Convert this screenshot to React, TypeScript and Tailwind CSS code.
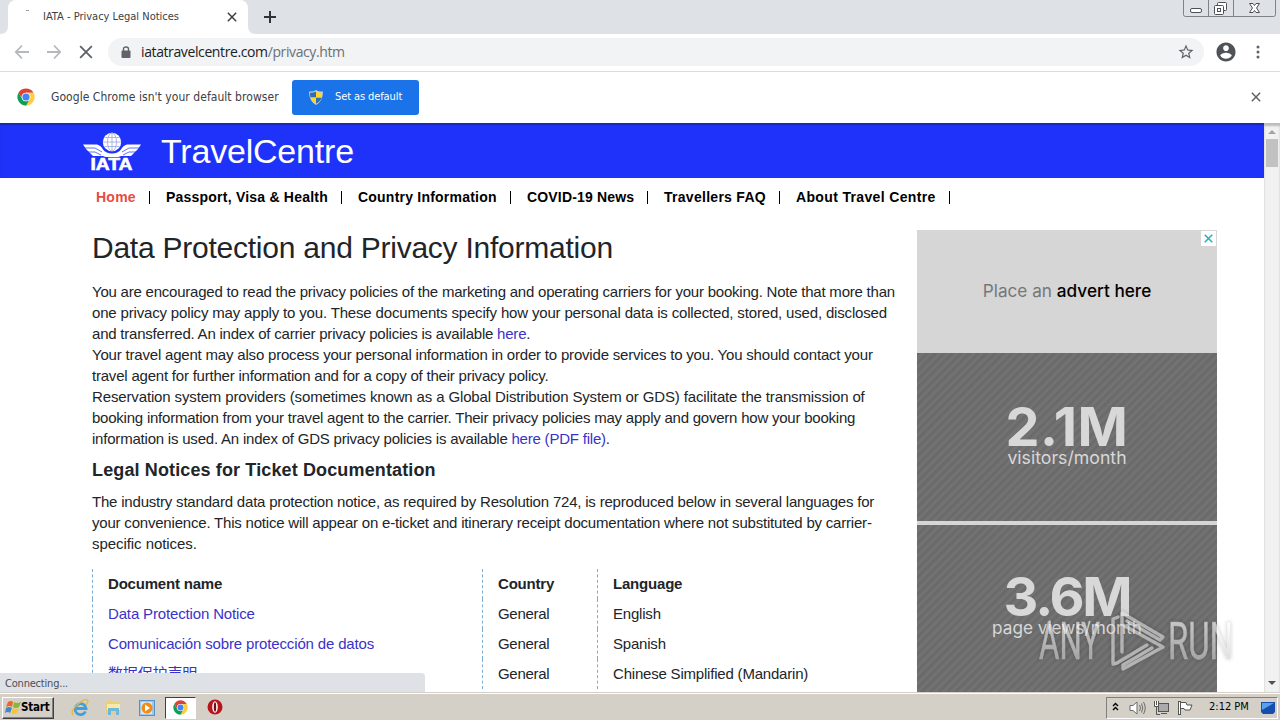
import React from "react";

interface NavItem {
	label: string;
	className: string;
	active?: boolean;
}

interface DocumentRow {
	name: string;
	country: string;
	language: string;
}

const navItems: NavItem[] = [
	{ label: "Home", className: "w-[70px] tracking-[0.25px]", active: true },
	{ label: "Passport, Visa & Health", className: "w-[192px] tracking-[0.22px]" },
	{ label: "Country Information", className: "w-[169px] tracking-[0.22px]" },
	{ label: "COVID-19 News", className: "w-[137px] tracking-[0.17px]" },
	{ label: "Travellers FAQ", className: "w-[132px] tracking-[0.28px]" },
	{ label: "About Travel Centre", className: "w-[170px] tracking-[0.35px]" },
];

const documents: DocumentRow[] = [
	{ name: "Data Protection Notice", country: "General", language: "English" },
	{
		name: "Comunicación sobre protección de datos",
		country: "General",
		language: "Spanish",
	},
	{
		name: "数据保护声明",
		country: "General",
		language: "Chinese Simplified (Mandarin)",
	},
];

const ChromeLogo: React.FC<{ className: string }> = ({ className }) => (
	<svg className={className} viewBox="0 0 48 48">
		<circle cx="24" cy="24" r="23" fill="#fff" />
		<path d="M4.1 12.5A23 23 0 0 1 43.9 12.5H24A11.5 11.5 0 0 0 14 29.8Z" fill="#db4437" />
		<path d="M43.9 12.5A23 23 0 0 1 24 47L34 29.8A11.5 11.5 0 0 0 24 12.5Z" fill="#ffcd40" />
		<path d="M24 47A23 23 0 0 1 4.1 12.5L14 29.8A11.5 11.5 0 0 0 34 29.8Z" fill="#0f9d58" />
		<circle cx="24" cy="24" r="11.5" fill="#f1f1f1" />
		<circle cx="24" cy="24" r="9.5" fill="#4285f4" />
	</svg>
);

const Cross: React.FC<{ className: string; strokeWidth?: number }> = ({
	className,
	strokeWidth = 1.8,
}) => (
	<svg className={className} viewBox="0 0 12 12" fill="none" stroke="currentColor" strokeWidth={strokeWidth}>
		<path d="M1 1l10 10M11 1L1 11" />
	</svg>
);

const WindowButtons = () => (
	<svg className="absolute right-0 top-0 h-[18px] w-[98px]" viewBox="0 0 98 18" fill="none" stroke="#7d828b">
		<path d="M1.5 0V14.5Q1.5 16.5 3.5 16.5H91.5Q93.5 16.5 93.5 14.5V0M26.5 0V16M51.5 0V16" />
		<g stroke="#4c5058" fill="#fff">
			<rect x="8.5" y="8.5" width="11" height="4" rx="1.5" />
			<rect x="35.5" y="2.5" width="9" height="8" rx="1" />
			<rect x="32.5" y="5.5" width="9" height="9" rx="1" />
			<rect x="35.5" y="8.5" width="3" height="3" />
			<path d="M67.5 3.5H71L72.5 5.5L74 3.5H77.5L74.5 8L77.5 12.5H74L72.5 10.5L71 12.5H67.5L70.5 8Z" />
		</g>
	</svg>
);

const TabStrip = () => (
	<div className="relative flex h-[34px] shrink-0 bg-[#dee1e6] pl-2">
		<div className="flex h-full w-[240px] items-center rounded-t-lg bg-white pl-[35px]">
			<span className="w-[186px] whitespace-nowrap text-[11px] text-[#3c4043]">
				IATA - Privacy Legal Notices
			</span>
			<Cross className="ml-[-2px] h-[10px] w-[10px] text-[#3c4043]" />
		</div>
		<div className="absolute left-[26px] top-[10px] h-px w-[3px] bg-[#9aa0a6]" />
		<svg className="absolute left-0 top-[26px] h-2 w-2" viewBox="0 0 8 8">
			<path d="M8 0V8H0Q8 8 8 0Z" fill="#fff" />
		</svg>
		<svg className="absolute left-[248px] top-[26px] h-2 w-2" viewBox="0 0 8 8">
			<path d="M0 0V8H8Q0 8 0 0Z" fill="#fff" />
		</svg>
		<svg className="ml-4 mt-[11px] h-3 w-3" viewBox="0 0 12 12" stroke="#30343a" strokeWidth="2">
			<path d="M6 0V12M0 6H12" />
		</svg>
		<WindowButtons />
	</div>
);

const Toolbar = () => (
	<div className="flex h-[38px] shrink-0 items-center border-b border-[#dadce0] bg-white pb-[2px]">
		<svg className="ml-[14px] h-4 w-4" viewBox="0 0 16 16" fill="none" stroke="#b5b8bc" strokeWidth="1.8">
			<path d="M15 8H2M8 1.5L1.8 8L8 14.5" />
		</svg>
		<svg className="ml-4 h-4 w-4" viewBox="0 0 16 16" fill="none" stroke="#b5b8bc" strokeWidth="1.8">
			<path d="M1 8H14M8 1.5L14.2 8L8 14.5" />
		</svg>
		<Cross className="ml-[17px] h-[14px] w-[14px] text-[#5f6368]" strokeWidth={1.6} />
		<div className="ml-[15px] flex h-7 w-[1096px] items-center rounded-full bg-[#f1f3f4] pl-[13px]">
			<svg className="h-3 w-[10px]" viewBox="0 0 10 12">
				<path d="M2.5 5V3Q2.5 1 5 1Q7.5 1 7.5 3V5" fill="none" stroke="#5f6368" strokeWidth="1.4" />
				<rect x="0.5" y="4.5" width="9" height="7.5" rx="1" fill="#5f6368" />
			</svg>
			<span className="ml-[10px] whitespace-nowrap font-['Open_Sans',sans-serif] text-[14px] tracking-[-0.39px] text-[#6b6f74]">
				<span className="text-[#202124]">iatatravelcentre.com</span>/privacy.htm
			</span>
			<svg className="ml-auto mr-[9px] h-[18px] w-[18px]" viewBox="0 0 24 24" fill="#5f6368">
				<path d="M22 9.24l-7.19-.62L12 2 9.19 8.63 2 9.24l5.46 4.73L5.82 21 12 17.27 18.18 21l-1.63-7.03L22 9.24zM12 15.4l-3.76 2.27 1-4.28-3.32-2.88 4.38-.38L12 6.1l1.71 4.04 4.38.38-3.32 2.88 1 4.28L12 15.4z" />
			</svg>
		</div>
		<svg className="ml-[12px] h-[20px] w-[20px]" viewBox="1.5 1.5 21 21" fill="#4f5358">
			<path d="M12 2C6.48 2 2 6.48 2 12s4.48 10 10 10 10-4.48 10-10S17.52 2 12 2zm0 3c1.66 0 3 1.34 3 3s-1.34 3-3 3-3-1.34-3-3 1.34-3 3-3zm0 14.2c-2.5 0-4.71-1.28-6-3.22.03-1.99 4-3.08 6-3.08 1.99 0 5.97 1.09 6 3.08-1.29 1.94-3.5 3.22-6 3.22z" />
		</svg>
		<svg className="ml-5 h-4 w-[4px]" viewBox="0 0 4 16" fill="#5f6368">
			<circle cx="2" cy="3" r="1.5" />
			<circle cx="2" cy="8" r="1.5" />
			<circle cx="2" cy="13" r="1.5" />
		</svg>
	</div>
);

const InfoBar = () => (
	<div className="flex h-[51px] shrink-0 items-center bg-white pb-px">
		<ChromeLogo className="ml-[17px] h-[18px] w-[18px]" />
		<span className="ml-4 w-[241px] whitespace-nowrap pb-px text-[12px] tracking-[0.05px] text-[#3c4043]">
			Google Chrome isn't your default browser
		</span>
		<button className="mt-px flex h-[35px] w-[127px] items-center rounded-[3px] bg-[#1a73e8] pl-[17px] text-[11px] text-white">
			<svg className="mr-3 h-[15px] w-[14px]" viewBox="0 0 14 15">
				<path d="M7 0Q10 2 14 1.5Q14 11 7 15Q0 11 0 1.5Q4 2 7 0Z" fill="#c5ccd2" />
				<path d="M7 1.5V7.5H1.4Q1 5 1 2.8Q4 3 7 1.5ZM7 7.5H12.6Q11.5 11.5 7 13.8Z" fill="#2d6fb5" />
				<path d="M7 1.5Q10 3 13 2.8Q13 5 12.6 7.5H7ZM7 7.5V13.8Q2.5 11.5 1.4 7.5Z" fill="#ffd52e" />
			</svg>
			<span className="whitespace-nowrap tracking-[-0.1px]">Set as default</span>
		</button>
		<Cross className="ml-auto mr-[19px] h-[10px] w-[10px] text-[#5f6368]" />
	</div>
);

const IataLogo = () => (
	<svg className="h-[40px] w-[58px]" viewBox="0 0 58 40">
		<circle cx="29" cy="10" r="9.2" fill="#fff" />
		<g fill="none" stroke="#9aa4dc" strokeWidth="0.8">
			<ellipse cx="29" cy="10" rx="4.5" ry="9" />
			<path d="M29 1V19M20 10H38M21.5 5.5H36.5M21.5 14.5H36.5" />
		</g>
		<path d="M0 12.5H14Q18 13.5 20 17.5Q23 21.500 29 21.5Q35 21.500 38 17.5Q40 13.5 44 12.5H58L55 17L52 20L48 24H38L33 26H25L20 24H10L6 20L3 17Z" fill="#fff" />
		<path d="M2 16H12L19 20M5 20H12L18 23M56 16H46L39 20M53 20H46L40 23" fill="none" stroke="#1e32fa" strokeWidth="0.7" />
		<path d="M7 25.500H51" stroke="#1e32fa" strokeWidth="1" />
		<text
			x="7.500"
			y="38"
			textLength="42"
			lengthAdjust="spacingAndGlyphs"
			fill="#fff"
			stroke="#fff"
			strokeWidth="0.6"
			fontFamily="Liberation Sans"
			fontSize="17"
			fontWeight="bold"
		>
			IATA
		</text>
	</svg>
);

const SiteHeader = () => (
	<header className="flex h-[55px] shrink-0 bg-[#1e32fa] pl-[83px] shadow-[inset_0_2px_1px_#1b28b4]">
		<div className="pt-[9px]">
			<IataLogo />
		</div>
		<span className="ml-5 pt-[7px] text-[34px] leading-[42px] tracking-[-0.2px] text-white">TravelCentre</span>
	</header>
);

const SiteNav = () => (
	<nav className="flex h-[39px] pl-[80px] pt-[13px] text-[14px] font-bold leading-[13px] text-black">
		{navItems.map((item) => (
			<div
				key={item.label}
				className={`${item.className} h-[13px] shrink-0 whitespace-nowrap border-r border-black pl-4 ${item.active ? "text-[#e94b41]" : ""}`}
			>
				{item.label}
			</div>
		))}
	</nav>
);

const Article = () => (
	<main className="w-[825px] shrink-0 whitespace-nowrap text-[15px] leading-[21px] text-[#212529]">
		<h1 className="h-[64px] pt-[12px] text-[30px] leading-[38px] tracking-[-0.24px]">
			Data Protection and Privacy Information
		</h1>
		<div className="tracking-[-0.193px]">
			<p className="tracking-[-0.223px]">
				You are encouraged to read the privacy policies of the marketing and operating carriers for your booking. Note that more than
			</p>
			<p className="tracking-[-0.167px]">
				one privacy policy may apply to you. These documents specify how your personal data is collected, stored, used, disclosed
			</p>
			<p className="tracking-[-0.213px]">
				and transferred. An index of carrier privacy policies is available <a className="text-[#3a32c8]">here</a>.
			</p>
			<p>Your travel agent may also process your personal information in order to provide services to you. You should contact your</p>
			<p className="tracking-[-0.21px]">travel agent for further information and for a copy of their privacy policy.</p>
			<p className="tracking-[-0.138px]">
				Reservation system providers (sometimes known as a Global Distribution System or GDS) facilitate the transmission of
			</p>
			<p className="tracking-[-0.227px]">
				booking information from your travel agent to the carrier. Their privacy policies may apply and govern how your booking
			</p>
			<p className="tracking-[-0.21px]">
				information is used. An index of GDS privacy policies is available <a className="text-[#3a32c8]">here (PDF file)</a>.
			</p>
		</div>
		<h2 className="h-[42px] pt-[9px] text-[18px] font-bold leading-[24px] tracking-[0.13px]">
			Legal Notices for Ticket Documentation
		</h2>
		<div className="tracking-[-0.2px]">
			<p>The industry standard data protection notice, as required by Resolution 724, is reproduced below in several languages for</p>
			<p>your convenience. This notice will appear on e-ticket and itinerary receipt documentation where not substituted by carrier-</p>
			<p className="tracking-[-0.06px]">specific notices.</p>
		</div>
		<div className="mt-[15px] leading-[30px] tracking-[-0.2px]">
			<div className="grid grid-cols-[390px_115px_320px] font-bold">
				<span className="border-l border-dashed border-[#7aaed0] pl-[15px]">Document name</span>
				<span className="border-l border-dashed border-[#7aaed0] pl-[15px]">Country</span>
				<span className="border-l border-dashed border-[#7aaed0] pl-[15px]">Language</span>
			</div>
			{documents.map((doc) => (
				<div key={doc.name} className="grid h-[30px] grid-cols-[390px_115px_320px]">
					<span className="border-l border-dashed border-[#7aaed0] pl-[15px] tracking-[-0.15px] text-[#3a32c8]">
						{doc.name}
					</span>
					<span className="border-l border-dashed border-[#7aaed0] pl-[15px] tracking-[-0.3px]">{doc.country}</span>
					<span className="border-l border-dashed border-[#7aaed0] pl-[15px]">{doc.language}</span>
				</div>
			))}
		</div>
	</main>
);

const stripes =
	"bg-[repeating-linear-gradient(135deg,#6a6a6a_0px,#6b6b6b_2.5px,#727272_3.5px,#727272_6px)]";

const Advert = () => (
	<aside className="relative mt-[13px] flex h-[475px] w-[300px] shrink-0 flex-col bg-[#d6d6d6] font-['Inter',sans-serif]">
		<div className="flex h-[122px] shrink-0 items-center justify-center text-[17.2px] text-[#777]">
			<span className="whitespace-nowrap">
				Place an <span className="font-medium text-black">advert here</span>
			</span>
		</div>
		<div className={`mt-px flex h-[168px] shrink-0 flex-col items-center pt-[49px] text-[#d8d8d8] ${stripes}`}>
			<span className="text-[54px] font-bold leading-[50px] tracking-[0.5px]">2.1M</span>
			<span className="mt-[-4px] text-[17.7px] leading-[20px]">visitors/month</span>
		</div>
		<div className={`mt-1 flex h-[180px] shrink-0 flex-col items-center pt-[47px] text-[#d8d8d8] ${stripes}`}>
			<span className="text-[54px] font-bold leading-[50px] tracking-[-2.2px]">3.6M</span>
			<span className="mt-[-4px] text-[17.2px] leading-[20px]">page views/month</span>
		</div>
		<div className="absolute right-px top-px flex h-[15px] w-[15px] items-center justify-center bg-white">
			<Cross className="h-[9px] w-[9px] text-[#24b0ba]" strokeWidth={2} />
		</div>
	</aside>
);

const Scrollbar = () => (
	<div className="flex w-4 shrink-0 flex-col items-center bg-[#f1f1f1] shadow-[inset_0_3px_2px_#bbb]">
		<svg className="mt-[7px] h-[4px] w-2" viewBox="0 0 8 4">
			<path d="M0 4L4 0L8 4Z" fill="#a3a3a3" />
		</svg>
		<div className="mt-[5px] h-[28px] w-3 bg-[#c1c1c1]" />
		<svg className="mb-[7px] mt-auto h-[4px] w-2" viewBox="0 0 8 4">
			<path d="M0 0L4 4L8 0Z" fill="#505050" />
		</svg>
	</div>
);

const Watermark = () => (
	<div className="absolute left-[1039px] top-[609px] opacity-60 drop-shadow-[0_0_2px_rgba(0,0,0,0.35)]">
		<svg className="h-[64px] w-[200px] overflow-visible" viewBox="0 0 200 64">
			<defs>
				<linearGradient id="fade" x1="0" y1="0" x2="0" y2="1">
					<stop offset="0.2" stopColor="#fff" />
					<stop offset="1" stopColor="#b8b8b8" />
				</linearGradient>
			</defs>
			<g fill="url(#fade)" stroke="#ddd" strokeWidth="0.5" fontFamily="Roboto" fontSize="52">
				<text x="0" y="50" textLength="61" lengthAdjust="spacingAndGlyphs">
					ANY
				</text>
				<text x="129" y="50" textLength="65" lengthAdjust="spacingAndGlyphs">
					RUN
				</text>
			</g>
			<g fill="none" stroke="#e0e0e0" strokeWidth="3.4" strokeLinejoin="round" strokeLinecap="round">
				<path d="M83 43V4L124 28L121 31L88 12" />
				<path d="M84 16L124 38L84 60V56L113 39" />
				<path d="M79 8L74 10V55L78 54L108 36" />
			</g>
		</svg>
	</div>
);

const Taskbar = () => (
	<footer className="flex h-[28px] shrink-0 items-center border-t border-[#d4d0c8] bg-[#d4d0c8] shadow-[inset_0_1px_0_#fff]">
		<div className="ml-[2px] mt-[2px] flex h-[22px] w-[52px] items-center border border-b-[#404040] border-l-white border-r-[#404040] border-t-white pl-[2px] shadow-[inset_-1px_-1px_0_#808080]">
			<svg className="h-4 w-4 shrink-0" viewBox="0 0 16 16">
				<path d="M3 2Q6 0 8 2L7 7Q5 5 1 7Z" fill="#f0642b" />
				<path d="M9 2Q12 4 16 2L14 7Q11 9 8 7Z" fill="#86b83b" />
				<path d="M1 8Q4 6 7 8L5 13Q3 11 0 13Z" fill="#3f88cc" />
				<path d="M8 8Q11 10 14 8L12 13Q9 15 6 13Z" fill="#f8c534" />
			</svg>
			<span className="text-[11.5px] font-bold tracking-[-0.2px] text-black">Start</span>
		</div>
		<svg className="ml-[17px] mt-[2px] h-[18px] w-[18px]" viewBox="0 0 18 18" fill="none">
			<path d="M14.5 12.5A5.5 5.5 0 1 1 15 9.5H5" stroke="#3fa0dc" strokeWidth="2.8" />
			<path d="M2 16Q-1 12 7 5T17 2Q17 4 15 6" stroke="#e8b93c" strokeWidth="1.4" />
		</svg>
		<svg className="ml-4 mt-[2px] h-[17px] w-[17px]" viewBox="0 0 17 17">
			<path d="M1 3L6 1L8 3H15V15H1Z" fill="#edcf73" />
			<rect x="2" y="5" width="13" height="6" fill="#f9e9a8" />
			<path d="M3 16V9H14V16H11V12H6V16Z" fill="#6fb8dd" />
		</svg>
		<svg className="ml-[17px] mt-[2px] h-4 w-4" viewBox="0 0 16 16">
			<rect x="0.5" y="0.5" width="15" height="15" fill="#9cc8eb" stroke="#5692c5" />
			<rect x="2" y="2" width="11" height="12" fill="#d9e7f1" />
			<circle cx="8" cy="8" r="5.5" fill="#f28a16" />
			<path d="M6 4.5L11 8L6 11.5Z" fill="#fff" />
		</svg>
		<div className="ml-[10px] mt-[2px] flex h-[22px] w-[31px] items-center justify-center border border-b-white border-l-[#404040] border-r-white border-t-[#404040] bg-white">
			<ChromeLogo className="h-[15px] w-[15px]" />
		</div>
		<svg className="ml-[11px] mt-[1px] h-4 w-4" viewBox="0 0 16 16">
			<circle cx="8" cy="8" r="7.5" fill="#b7141b" />
			<ellipse cx="8" cy="8" rx="2.8" ry="5.8" fill="#fff" />
			<ellipse cx="8" cy="8" rx="1.2" ry="4.8" fill="#711015" />
		</svg>
		<div className="ml-auto mr-[2px] mt-[2px] flex h-[22px] w-[172px] items-center border border-b-white border-l-[#808080] border-r-white border-t-[#808080]">
			<svg className="ml-[5px] mt-[-3px] h-[9px] w-[7px]" viewBox="0 0 7 9" fill="none" stroke="#000" strokeWidth="1.4">
				<path d="M1 4L3.5 1.5L6 4M1 8L3.5 5.5L6 8" />
			</svg>
			<svg className="ml-[10px] h-4 w-[17px]" viewBox="0 0 17 16" fill="#fff" stroke="#6b6b6b">
				<path d="M1 5.5H4L8 2V14L4 10.5H1Z" />
				<path d="M10.5 5Q12.5 8 10.5 11M12.5 3.5Q15 8 12.5 12.5M14.5 2Q18 8 14.5 14" fill="none" />
			</svg>
			<svg className="ml-[7px] h-4 w-4" viewBox="0 0 16 16" fill="#fff" stroke="#555">
				<rect x="5.5" y="3.5" width="10" height="8" fill="#aaa" />
				<path d="M8 13.5H14M3.5 7V14.5H7" fill="none" />
				<path d="M1.5 1V6.5H5.5V1M3.5 1V5" />
			</svg>
			<svg className="ml-2 h-4 w-4" viewBox="0 0 16 16" fill="#fff" stroke="#555">
				<path d="M3.5 2.5H9L10 5H15L13 10H8L7 8.5H3.5Z" />
				<rect x="1.5" y="1.5" width="2" height="13" />
			</svg>
			<span className="ml-[16px] w-[51px] whitespace-nowrap text-[11px] text-black">2:12 PM</span>
			<svg className="h-[14px] w-4" viewBox="0 0 16 14">
				<path d="M1 1H15V11L13 13H3L1 11Z" fill="#164eb0" />
				<path d="M2 2H14L2 9Z" fill="#5aa0ed" />
			</svg>
		</div>
	</footer>
);

const App: React.FC = () => {
	return (
		<div className="relative flex h-[720px] w-[1280px] flex-col overflow-hidden bg-white font-['DejaVu_Sans_Condensed','DejaVu_Sans',sans-serif]">
			<TabStrip />
			<Toolbar />
			<InfoBar />
			<div className="flex h-[569px] shrink-0 overflow-hidden">
				<div className="w-[1264px] shrink-0 overflow-hidden font-['Liberation_Sans','Noto_Sans_CJK_SC',sans-serif]">
					<SiteHeader />
					<SiteNav />
					<div className="flex pl-[92px]">
						<Article />
						<Advert />
					</div>
				</div>
				<Scrollbar />
			</div>
			<div className="absolute left-0 top-[673px] h-[19px] w-[425px] rounded-tr bg-[#dee1e6] pl-[5px] text-[11px] leading-[21px] tracking-[-0.2px] text-[#4b4f54]">
				Connecting...
			</div>
			<Taskbar />
			<Watermark />
		</div>
	);
};

export default App;
